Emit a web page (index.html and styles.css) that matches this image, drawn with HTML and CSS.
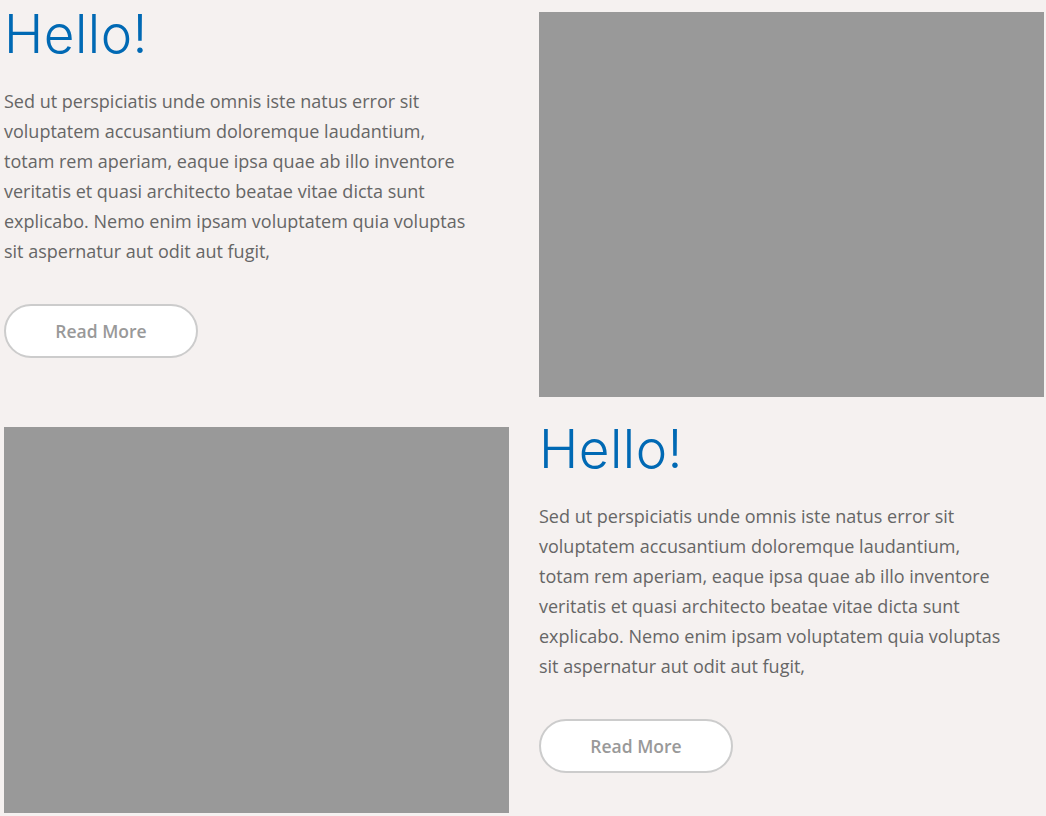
FILE: index.html
```html
<!DOCTYPE html>
<html lang="en">
<head>
<meta charset="utf-8">
<title>Hello</title>
<link rel="stylesheet" href="styles.css">
</head>
<body>
<main class="page">
  <section class="row">
    <div class="text-col">
      <h1 class="title">Hello!</h1>
      <p class="copy">Sed ut perspiciatis unde omnis iste natus error sit voluptatem accusantium doloremque laudantium, totam rem aperiam, eaque ipsa quae ab illo inventore veritatis et quasi architecto beatae vitae dicta sunt explicabo. Nemo enim ipsam voluptatem quia voluptas sit aspernatur aut odit aut fugit,</p>
      <a class="btn" href="#">Read More</a>
    </div>
    <div class="media"></div>
  </section>
  <section class="row">
    <div class="media media-tall"></div>
    <div class="text-col">
      <h1 class="title">Hello!</h1>
      <p class="copy">Sed ut perspiciatis unde omnis iste natus error sit voluptatem accusantium doloremque laudantium, totam rem aperiam, eaque ipsa quae ab illo inventore veritatis et quasi architecto beatae vitae dicta sunt explicabo. Nemo enim ipsam voluptatem quia voluptas sit aspernatur aut odit aut fugit,</p>
      <a class="btn" href="#">Read More</a>
    </div>
  </section>
</main>
</body>
</html>
```
FILE: styles.css
```css
html, body {
  margin: 0;
  padding: 0;
  background: #f5f1f0;
}
body {
  font-family: "Open Sans", "Liberation Sans", sans-serif;
  color: #666666;
}
.page {
  padding: 12px 2px 0 4px;
  display: flex;
  flex-direction: column;
  gap: 30px;
}
.row {
  display: grid;
  grid-template-columns: 505px 505px;
  column-gap: 30px;
  align-items: start;
}
.text-col {
  padding-right: 30px;
  display: flex;
  flex-direction: column;
  align-items: flex-start;
}
.title {
  margin: -9px 0 0;
  font-family: "Inter", "Open Sans", sans-serif;
  font-size: 53px;
  font-weight: 300;
  letter-spacing: 0.5px;
  line-height: 63px;
  color: #0069b4;
}
.copy {
  margin: 20px 0 0;
  font-size: 18px;
  line-height: 30px;
  color: #666666;
}
.btn {
  margin-top: 38px;
  box-sizing: border-box;
  width: 194px;
  height: 54px;
  border: 2px solid #cccccc;
  border-radius: 27px;
  background: #ffffff;
  color: #999999;
  font-size: 17.5px;
  font-weight: 600;
  text-decoration: none;
  display: flex;
  align-items: center;
  justify-content: center;
}
.media {
  height: 385px;
  background: #999999;
}
.media-tall {
  height: 386px;
}
```
